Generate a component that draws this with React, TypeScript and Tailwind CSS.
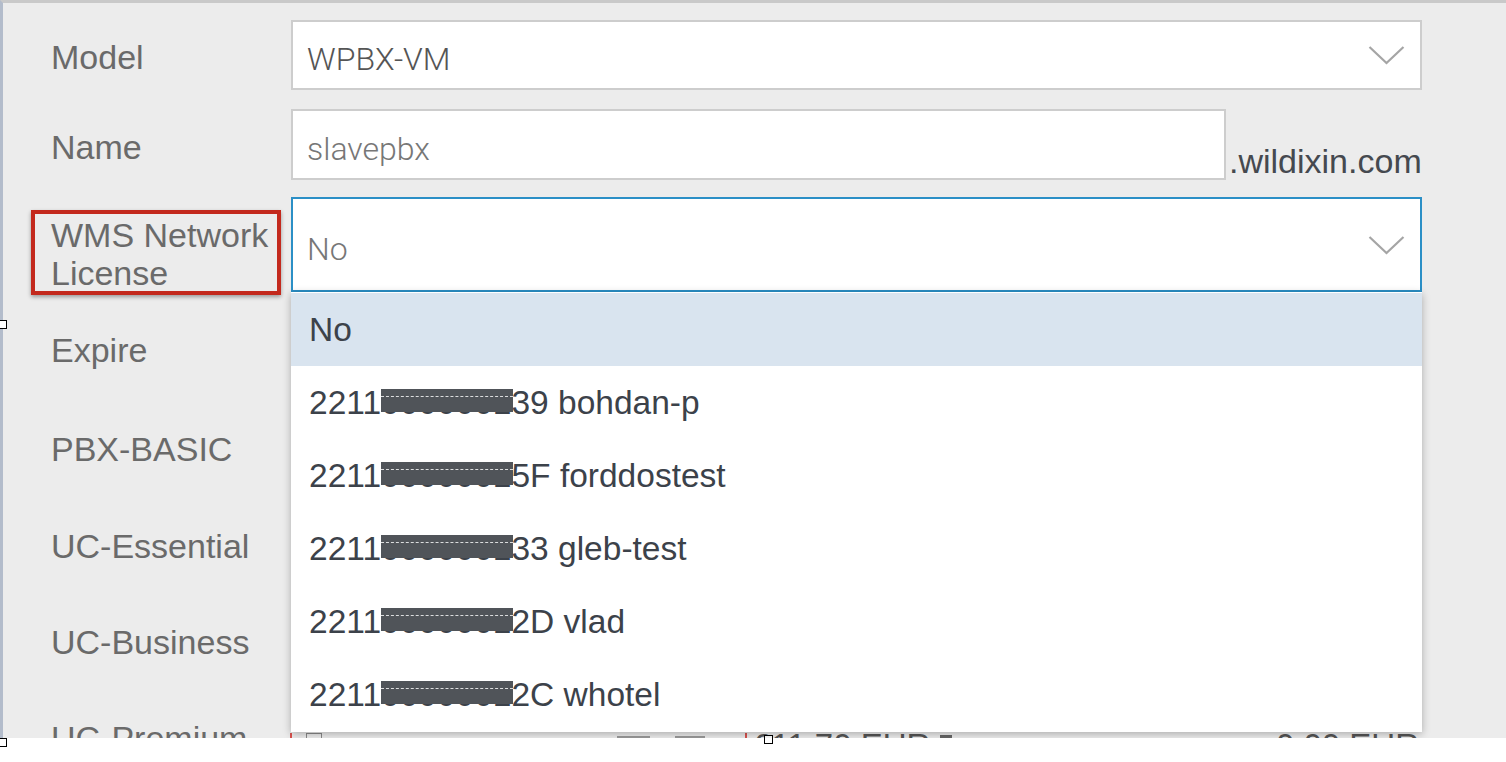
import React from 'react';

const LABEL = "font-['Liberation_Sans',Arial,sans-serif] text-[34px] leading-[38px] text-[#6a6a6a]";
const VALUE = "font-['Roboto',Arial,sans-serif] font-light text-[32px] leading-[38px] mt-[8px]";
const ITEM = "font-['Liberation_Sans',Arial,sans-serif] text-[33.5px] leading-[73px] text-[#3c424a]";

type License = { tail: string; name: string };

const LICENSES: License[] = [
  { tail: '39', name: 'bohdan-p' },
  { tail: '5F', name: 'forddostest' },
  { tail: '33', name: 'gleb-test' },
  { tail: '2D', name: 'vlad' },
  { tail: '2C', name: 'whotel' },
];

function Chevron() {
  return (
    <svg width="37" height="20" viewBox="0 0 37 20" fill="none">
      <path d="M1.5 2 L18.5 18 L35.5 2" stroke="#a5a5a5" strokeWidth="2.2" />
    </svg>
  );
}

// blacked-out serial digits, like the reference's marker scribble
function Redacted() {
  return (
    <span className="relative">
      0000001
      <span className="absolute left-0 right-[-2px] top-[5px] h-[23px] bg-[#505459]">
        <span className="absolute left-0 right-0 top-[7px] border-t-[1.5px] border-dashed border-white/80" />
      </span>
    </span>
  );
}

function Handle({ className }: { className: string }) {
  return <div className={`absolute w-[9px] h-[9px] bg-white border border-black ${className}`} />;
}

function Row({ label, height, children }: { label: React.ReactNode; height: string; children?: React.ReactNode }) {
  return (
    <div className={`flex items-center ${height}`}>
      <div className={`w-[240px] shrink-0 mt-[4px] ${LABEL}`}>{label}</div>
      <div className="flex-1 h-full">{children}</div>
    </div>
  );
}

export default function App() {
  return (
    <div className="relative w-[1506px] h-[762px] bg-white overflow-hidden">
      <div className="relative h-[738px] bg-[#ececec] border-l-[3px] border-l-[#b3bccb] border-t-[3px] border-t-[#c9c9c9] overflow-hidden">
        <div className="flex flex-col pl-[48px] pt-[17px] w-[1419px]">
          {/* Model */}
          <Row label="Model" height="h-[70px]">
            <div className="flex items-center justify-between h-full w-[1131px] bg-white border-2 border-[#cdcdcd] pl-[14px] pr-[15px]">
              <span className={`${VALUE} text-[#555]`}>WPBX-VM</span>
              <Chevron />
            </div>
          </Row>

          {/* Name */}
          <div className="mt-[19px]">
            <Row label="Name" height="h-[71px]">
              <div className="flex items-end h-full">
                <div className="flex items-center h-full w-[935px] bg-white border-2 border-[#cdcdcd] pl-[14px]">
                  <span className={`${VALUE} text-[#777]`}>slavepbx</span>
                </div>
                <span className="ml-[3px] font-['Liberation_Sans',Arial,sans-serif] text-[34px] leading-[38px] text-[#45494f]">
                  .wildixin.com
                </span>
              </div>
            </Row>
          </div>

          {/* WMS Network License with open dropdown */}
          <div className="mt-[17px] flex h-[95px]">
            <div className={`relative w-[240px] shrink-0 pt-[19px] ${LABEL}`}>
              <div className="absolute left-[-20px] top-[13px] w-[250px] h-[85px] border-[4px] border-[#c3291d] shadow-[0_2px_4px_rgba(0,0,0,0.35)]" />
              <div>WMS Network</div>
              <div>License</div>
            </div>
            <div className="relative w-[1131px] h-full">
              <div className="flex items-center justify-between h-full bg-white border-2 border-[#2b8fc6] pl-[14px] pr-[15px]">
                <span className={`${VALUE} text-[#777]`}>No</span>
                <Chevron />
              </div>
              <div className="absolute left-0 top-full z-10 w-full bg-white shadow-[0_2px_8px_rgba(0,0,0,0.28)] pt-[1px] pb-[1px]">
                <div className={`h-[73px] bg-[#d9e4ef] pl-[18px] ${ITEM}`}>No</div>
                {LICENSES.map((l) => (
                  <div key={l.name} className={`h-[73px] pl-[18px] whitespace-nowrap ${ITEM}`}>
                    2211
                    <Redacted />
                    {l.tail} {l.name}
                  </div>
                ))}
              </div>
            </div>
          </div>

          <div className="mt-[6px]">
            <Row label="Expire" height="h-[100px]" />
          </div>
          <Row label="PBX-BASIC" height="h-[98px]" />
          <Row label="UC-Essential" height="h-[96px]" />
          <Row label="UC-Business" height="h-[96px]" />

          {/* UC-Premium: only its top edge shows under the dropdown */}
          <div className="flex items-center h-[96px]">
            <div className={`w-[240px] shrink-0 mt-[4px] ${LABEL}`}>UC-Premium</div>
            <div className="flex items-start h-full w-[1131px] pt-[45px] ml-[-1px]">
              <div className="w-[2px] h-[40px] bg-[#d9534f]" />
              <div className="ml-[14px] w-[16px] h-[16px] border border-[#8a8a8a]" />
              <div className="ml-[295px] mt-[3px] w-[33px] h-[3px] bg-[#9a9a9a]" />
              <div className="ml-[25px] mt-[3px] w-[30px] h-[3px] bg-[#9a9a9a]" />
              <div className="ml-[40px] w-[2px] h-[40px] bg-[#d9534f]" />
              <span className="ml-[6px] mt-[-6px] font-['Liberation_Sans',Arial,sans-serif] text-[33px] leading-[38px] text-[#555]">
                €11.70 EUR
              </span>
              <div className="ml-[10px] mt-[2px] w-[12px] h-[10px] bg-[#666]" />
              <span className="ml-auto mr-[2px] mt-[-6px] font-['Liberation_Sans',Arial,sans-serif] text-[33px] leading-[38px] text-[#555]">
                0.00 EUR
              </span>
            </div>
          </div>
        </div>
      </div>

      <Handle className="left-[-2px] top-[320px]" />
      <Handle className="left-[-2px] top-[738px]" />
      <Handle className="left-[764px] top-[735px]" />
    </div>
  );
}
